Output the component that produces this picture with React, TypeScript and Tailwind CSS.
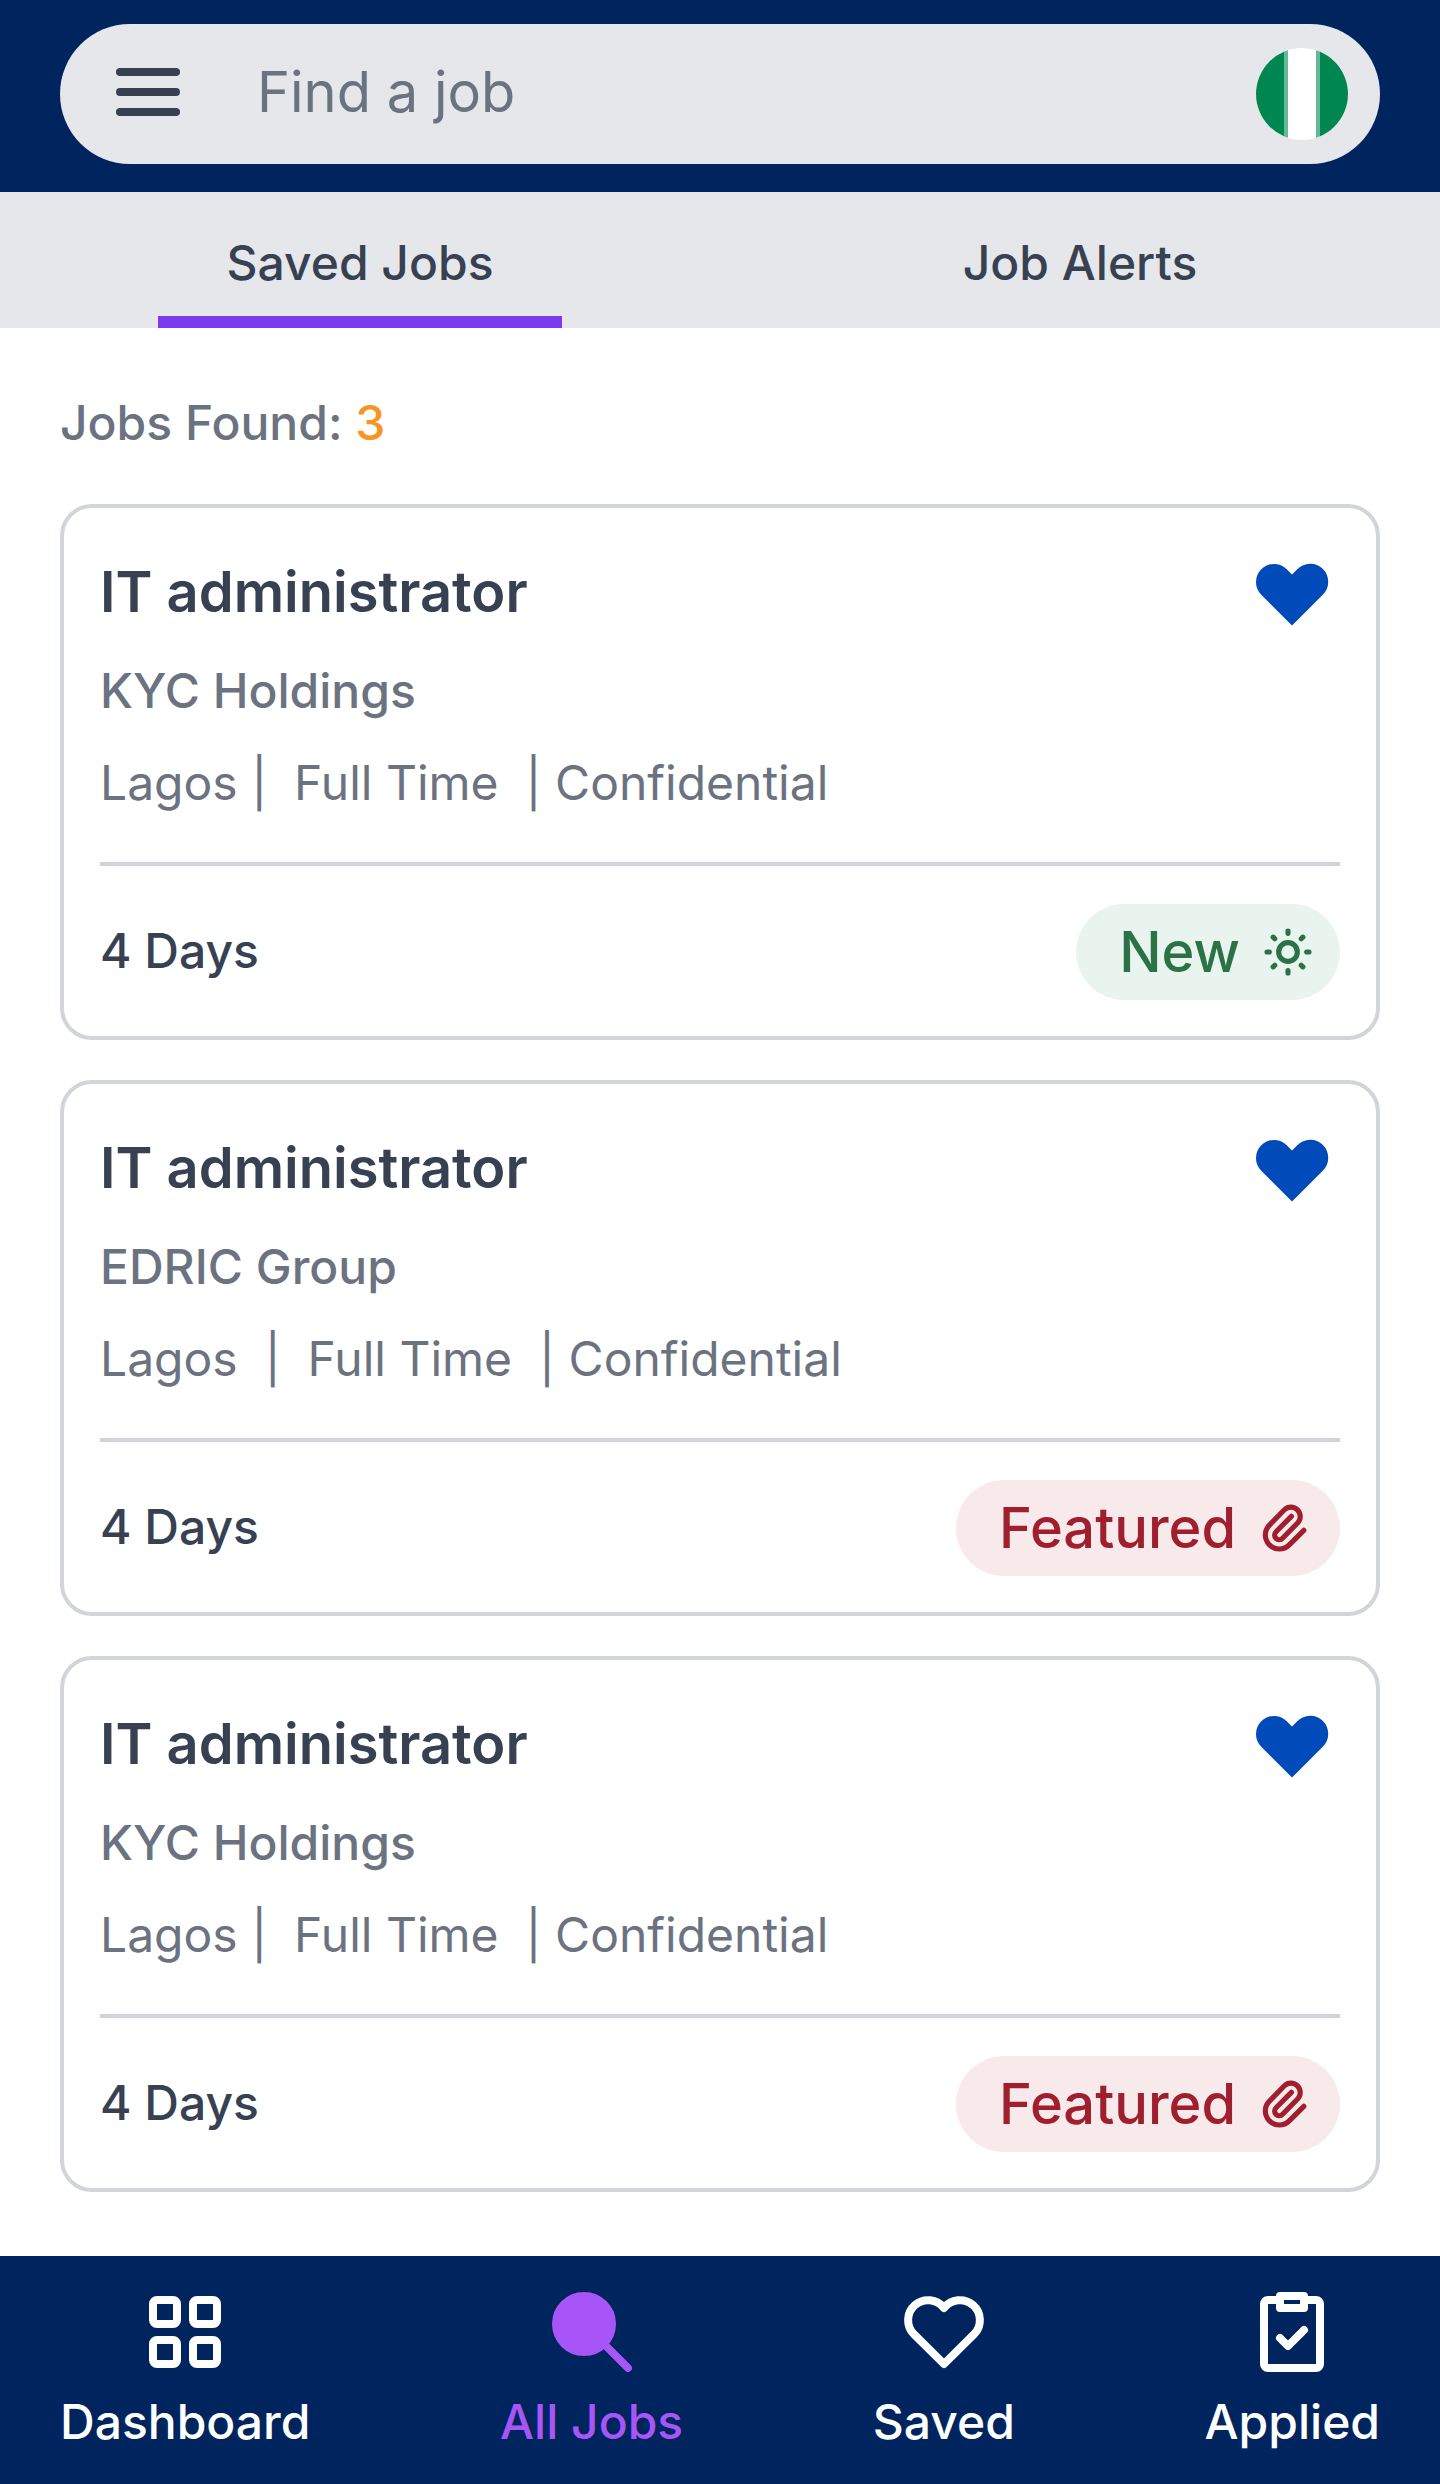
import React from "react";

type Badge = "new" | "featured";

interface Job {
  title: string;
  company: string;
  details: string;
  badge: Badge;
}

const jobs: Job[] = [
  { title: "IT administrator", company: "KYC Holdings", details: "Lagos |  Full Time  | Confidential", badge: "new" },
  { title: "IT administrator", company: "EDRIC Group", details: "Lagos  |  Full Time  | Confidential", badge: "featured" },
  { title: "IT administrator", company: "KYC Holdings", details: "Lagos |  Full Time  | Confidential", badge: "featured" },
];

const outline = {
  viewBox: "0 0 24 24",
  fill: "none",
  stroke: "currentColor",
  strokeWidth: 2,
  strokeLinecap: "round",
  strokeLinejoin: "round",
  "aria-hidden": true,
} as const;

function MenuIcon() {
  return (
    <svg viewBox="0 0 64 48" className="h-12 w-16 fill-[#374151]" aria-hidden="true">
      <rect width="64" height="8" rx="4" />
      <rect y="20" width="64" height="8" rx="4" />
      <rect y="40" width="64" height="8" rx="4" />
    </svg>
  );
}

function FlagIcon() {
  return (
    <svg viewBox="0 0 92 92" className="size-[92px] rounded-full" aria-hidden="true">
      <rect width="92" height="92" fill="#fff" />
      <rect width="28" height="92" fill="#008751" />
      <rect x="28" width="4" height="92" fill="#66b797" />
      <rect x="60" width="4" height="92" fill="#66b797" />
      <rect x="64" width="28" height="92" fill="#008751" />
    </svg>
  );
}

function SunIcon() {
  return (
    <svg {...outline} strokeWidth={2.2} className="size-14">
      <path d="M12 3v1m0 16v1m9-9h-1M4 12H3m15.364 6.364l-.707-.707M6.343 6.343l-.707-.707m12.728 0l-.707.707M6.343 17.657l-.707.707M16 12a4 4 0 11-8 0 4 4 0 018 0z" />
    </svg>
  );
}

function ClipIcon() {
  return (
    <svg {...outline} strokeWidth={2.2} className="size-14">
      <path d="M15.172 7l-6.586 6.586a2 2 0 102.828 2.828l6.414-6.586a4 4 0 00-5.656-5.656l-6.415 6.585a6 6 0 108.486 8.486L20.5 13" />
    </svg>
  );
}

function JobCard({ job }: { job: Job }) {
  return (
    <article className="rounded-[32px] border-4 border-[#d1d5db] p-9">
      <div className="flex items-start justify-between">
        <h2 className="pt-3 text-[56px] leading-[72px] font-semibold text-[#374151]">{job.title}</h2>
        <button type="button" aria-label="Remove from saved jobs" className="mt-0.5 mr-[3px] size-[90px]">
          <svg viewBox="0 0 20 20" className="size-full fill-[#004aba]" aria-hidden="true">
            <path d="M3.172 5.172a4 4 0 015.656 0L10 6.343l1.172-1.171a4 4 0 115.656 5.656L10 17.657l-6.828-6.829a4 4 0 010-5.656z" />
          </svg>
        </button>
      </div>
      <p className="mt-[19px] text-[48px] leading-[72px] font-medium text-[#6b7280]">{job.company}</p>
      <p className="mt-5 text-[48px] leading-[72px] whitespace-pre-wrap text-[#6b7280]">{job.details}</p>
      <div className="mt-[43px] flex items-center justify-between border-t-4 border-[#d1d5db] pt-[38px]">
        <p className="pb-0.5 text-[48px] leading-[72px] font-medium text-[#374151]">4 Days</p>
        {job.badge === "new" ? (
          <span className="flex h-24 items-center gap-5 rounded-full bg-[#e9f4ee] pr-6 pl-[43px] text-[56px] font-medium text-[#2b7247]">
            New
            <SunIcon />
          </span>
        ) : (
          <span className="flex h-24 items-center gap-5 rounded-full bg-[#f8e9ea] pr-7 pl-[43px] text-[56px] font-medium text-[#9f1f2e]">
            Featured
            <ClipIcon />
          </span>
        )}
      </div>
    </article>
  );
}

const navItems = [
  {
    label: "Dashboard",
    active: false,
    icon: (
      <svg {...outline} className="size-24">
        <rect x="4" y="4" width="6" height="6" rx="1" />
        <rect x="14" y="4" width="6" height="6" rx="1" />
        <rect x="4" y="14" width="6" height="6" rx="1" />
        <rect x="14" y="14" width="6" height="6" rx="1" />
      </svg>
    ),
  },
  {
    label: "All Jobs",
    active: true,
    icon: (
      <svg {...outline} fill="currentColor" className="size-24">
        <path d="M21 21l-6-6m2-5a7 7 0 11-14 0 7 7 0 0114 0z" />
      </svg>
    ),
  },
  {
    label: "Saved",
    active: false,
    icon: (
      <svg {...outline} className="size-24">
        <path d="M12 6A5 5 0 1 0 4.460 12.540L12 20l7.540-7.460A5 5 0 1 0 12 6z" />
      </svg>
    ),
  },
  {
    label: "Applied",
    active: false,
    icon: (
      <svg {...outline} className="size-24">
        <path d="M9 4H6a1 1 0 00-1 1v15a1 1 0 001 1h12a1 1 0 001-1V5a1 1 0 00-1-1h-3M9 3h6v3H9zM9 13.500l2 2 4-4" />
      </svg>
    ),
  },
];

export default function App() {
  return (
    <div className="flex min-h-screen flex-col bg-white font-['Inter',sans-serif]">
      <header className="bg-[#00245d] px-[60px] pt-6 pb-7">
        <div className="flex h-[140px] items-center rounded-full bg-[#e5e7eb] pr-8 pl-14">
          <div className="flex min-w-0 flex-1 items-center pb-1">
            <button type="button" aria-label="Open menu">
              <MenuIcon />
            </button>
            <input
              type="text"
              aria-label="Find a job"
              placeholder="Find a job"
              className="ml-[77px] min-w-0 flex-1 bg-transparent text-[56px] leading-[72px] text-[#374151] outline-none placeholder:text-[#6b7280]"
            />
          </div>
          <button type="button" aria-label="Country: Nigeria">
            <FlagIcon />
          </button>
        </div>
      </header>
      <nav aria-label="Job lists" className="grid h-[136px] grid-cols-2 bg-[#e5e7eb] text-[48px] leading-[72px] font-medium text-[#374151]">
        <a href="#saved" aria-current="page" className="mx-auto flex w-[56%] justify-center border-b-12 border-[#7c3aed] pt-[35px]">
          Saved Jobs
        </a>
        <a href="#alerts" className="mx-auto flex w-[56%] justify-center pt-[35px]">
          Job Alerts
        </a>
      </nav>
      <main className="flex-1 px-[60px] pt-[59px] pb-16">
        <p className="text-[48px] leading-[72px] font-medium text-[#6b7280]">
          Jobs Found: <span className="text-[#f99423]">3</span>
        </p>
        <div className="mt-[45px] flex flex-col gap-10">
          {jobs.map((job, i) => (
            <JobCard key={i} job={job} />
          ))}
        </div>
      </main>
      <nav aria-label="Main" className="flex justify-between bg-[#00245d] px-[60px] pt-7 pb-[26px] text-[48px] leading-[72px] font-medium">
        {navItems.map((item) => (
          <a
            key={item.label}
            href="#"
            aria-current={item.active ? "page" : undefined}
            className={
              item.active
                ? "flex flex-col items-center gap-1.5 text-[#a855f7]"
                : "flex flex-col items-center gap-1.5 text-white"
            }
          >
            {item.icon}
            {item.label}
          </a>
        ))}
      </nav>
    </div>
  );
}
